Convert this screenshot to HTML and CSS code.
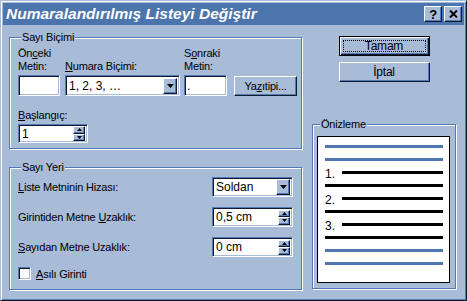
FILE: index.html
```html
<!doctype html>
<html lang="tr">
<head>
  <meta charset="UTF-8">
  <meta name="viewport" content="width=device-width, initial-scale=1">
  <title>Numaralandırılmış Listeyi Değiştir</title>
  <link rel="stylesheet" href="styles.css">
</head>
<body>
<div class="dialog">
  <div class="titlebar">
    <span class="title">Numaralandırılmış Listeyi Değiştir</span>
    <div class="title-buttons">
      <button class="tbtn raised">?</button>
      <button class="tbtn raised">
        <svg width="9" height="8" viewBox="0 0 9 8"><path d="M1 0.5 L8 7.5 M8 0.5 L1 7.5" stroke="#000" stroke-width="2"/></svg>
      </button>
    </div>
  </div>

  <div class="content">
    <div class="left">
      <fieldset class="group format">
        <legend>Sayı Biçimi</legend>
        <div class="format-row">
          <div class="field f-before">
            <label>Ön<u>c</u>eki<br>Metin:</label>
            <div class="edit sunken"></div>
          </div>
          <div class="field f-style">
            <label><u>N</u>umara Biçimi:</label>
            <div class="edit combo sunken">
              <span class="val">1, 2, 3, …</span>
              <span class="drop raised"><svg width="7" height="4" viewBox="0 0 7 4"><path d="M0 0h7L3.5 4z"/></svg></span>
            </div>
          </div>
          <div class="field f-after">
            <label>S<u>o</u>nraki<br>Metin:</label>
            <div class="edit sunken"><span class="val">.</span></div>
          </div>
          <button class="btn raised font-btn">Ya<u>z</u>ıtipi...</button>
        </div>
        <div class="field start">
          <label><u>B</u>aşlangıç:</label>
          <div class="spin sunken">
            <span class="val">1</span>
            <span class="spin-btns">
              <span class="raised"><svg width="5" height="3" viewBox="0 0 5 3"><path d="M2.5 0L5 3H0z"/></svg></span>
              <span class="raised"><svg width="5" height="3" viewBox="0 0 5 3"><path d="M0 0h5L2.5 3z"/></svg></span>
            </span>
          </div>
        </div>
      </fieldset>

      <fieldset class="group place">
        <legend>Sayı Yeri</legend>
        <div class="place-row">
          <label><u>L</u>iste Metninin Hizası:</label>
          <div class="combo sunken">
            <span class="val">Soldan</span>
            <span class="drop raised"><svg width="7" height="4" viewBox="0 0 7 4"><path d="M0 0h7L3.5 4z"/></svg></span>
          </div>
        </div>
        <div class="place-row">
          <label>Girintiden Metne <u>U</u>zaklık:</label>
          <div class="spin sunken">
            <span class="val">0,5 cm</span>
            <span class="spin-btns">
              <span class="raised"><svg width="5" height="3" viewBox="0 0 5 3"><path d="M2.5 0L5 3H0z"/></svg></span>
              <span class="raised"><svg width="5" height="3" viewBox="0 0 5 3"><path d="M0 0h5L2.5 3z"/></svg></span>
            </span>
          </div>
        </div>
        <div class="place-row">
          <label><u>S</u>ayıdan Metne Uzaklık:</label>
          <div class="spin sunken">
            <span class="val">0 cm</span>
            <span class="spin-btns">
              <span class="raised"><svg width="5" height="3" viewBox="0 0 5 3"><path d="M2.5 0L5 3H0z"/></svg></span>
              <span class="raised"><svg width="5" height="3" viewBox="0 0 5 3"><path d="M0 0h5L2.5 3z"/></svg></span>
            </span>
          </div>
        </div>
        <div class="check-row">
          <span class="checkbox sunken"></span>
          <label><u>A</u>sılı Girinti</label>
        </div>
      </fieldset>
    </div>

    <div class="right">
      <button class="btn default"><span class="focus">Tamam</span></button>
      <button class="btn raised cancel">İptal</button>
      <fieldset class="group preview">
        <legend>Önizleme</legend>
        <div class="page">
          <div class="line blue"></div>
          <div class="line blue"></div>
          <div class="num-row"><span class="num">1.</span><div class="line"></div></div>
          <div class="line"></div>
          <div class="num-row"><span class="num">2.</span><div class="line"></div></div>
          <div class="line"></div>
          <div class="num-row"><span class="num">3.</span><div class="line"></div></div>
          <div class="line"></div>
          <div class="line blue"></div>
          <div class="line blue"></div>
        </div>
      </fieldset>
    </div>
  </div>
</div>
</body>
</html>
```

FILE: styles.css
```css
* {
  box-sizing: border-box;
}
body {
  margin: 0;
  font-family: "Liberation Sans", Arial, sans-serif;
  font-size: 11px;
  letter-spacing: -0.2px;
  color: #000;
  background: #a8bbd7;
}
button {
  font: inherit;
  color: inherit;
  letter-spacing: inherit;
  padding: 0;
}
.dialog {
  width: 467px;
  height: 301px;
  padding: 2px;
  border: 1px solid;
  border-color: #a8bbd7 #0e1a2e #0e1a2e #a8bbd7;
  box-shadow: inset 1px 1px #fff, inset -1px -1px #5579b2;
  background: #a8bbd7;
  display: flex;
  flex-direction: column;
}

/* title bar */
.titlebar {
  height: 22px;
  background: #4d75ad;
  display: flex;
  align-items: center;
  justify-content: space-between;
  padding: 0 2px 0 3px;
}
.title {
  color: #fff;
  font-size: 15.5px;
  font-weight: bold;
  font-style: italic;
  letter-spacing: 0;
  line-height: 22px;
}
.title-buttons {
  display: flex;
  gap: 2px;
}
.tbtn {
  width: 18px;
  height: 16px;
  font-weight: bold;
  font-size: 13px;
  display: flex;
  align-items: center;
  justify-content: center;
}

/* bevels */
.raised {
  background: #a8bbd7;
  border: 1px solid;
  border-color: #fff #0e1a2e #0e1a2e #fff;
  box-shadow: inset -1px -1px #5579b2;
}
.sunken {
  background: #fff;
  border: 1px solid;
  border-color: #5579b2 #fff #fff #5579b2;
  box-shadow: inset 1px 1px #0e1a2e, inset -1px -1px #a8bbd7;
}

.content {
  flex: 1;
  display: flex;
  gap: 10px;
  padding: 6px 7px 8px 6px;
}
.left {
  width: 293px;
  display: flex;
  flex-direction: column;
  gap: 12px;
}
.right {
  width: 144px;
  display: flex;
  flex-direction: column;
  align-items: center;
}

/* group boxes */
.group {
  margin: 0;
  padding: 0;
  min-width: 0;
  border: 1px solid #5579b2;
  box-shadow: 1px 1px #fff, inset 1px 1px #fff;
}
.group legend {
  margin-left: 3px;
  padding: 0 1px;
  line-height: 13px;
  background: #a8bbd7;
}

.format {
  padding: 3px 3px 5px 8px;
}
.format-row {
  display: flex;
  align-items: flex-end;
}
.field {
  flex-shrink: 0;
  display: flex;
  flex-direction: column;
}
.field label {
  line-height: 13px;
  margin-bottom: 2px;
}
.edit {
  height: 21px;
  display: flex;
  align-items: center;
  padding: 0 2px;
}
.f-before { width: 42px; margin-right: 5px; }
.f-style { width: 115px; margin-right: 4px; }
.f-after { width: 43px; margin-right: 7px; }
.start {
  margin-top: 13px;
}

.val {
  flex: 1;
  white-space: nowrap;
  font-size: 12px;
  letter-spacing: 0;
}
.combo {
  display: flex;
  align-items: center;
  padding: 2px 2px 2px 3px;
}
.drop {
  width: 14px;
  height: 16px;
  display: flex;
  align-items: center;
  justify-content: center;
}
.spin {
  width: 70px;
  height: 19px;
  display: flex;
  align-items: center;
  padding: 2px 2px 2px 3px;
}
.spin-btns {
  width: 12px;
  height: 15px;
  display: flex;
  flex-direction: column;
}
.spin-btns span {
  flex: 1;
  display: flex;
  align-items: center;
  justify-content: center;
}

.place {
  flex: 1;
  padding: 3px 8px 7px 8px;
}
.place-row {
  height: 20px;
  margin-bottom: 10px;
  display: flex;
  align-items: center;
  justify-content: space-between;
}
.place .combo,
.place .spin {
  width: 81px;
  height: 20px;
}
.check-row {
  margin-top: 4px;
  display: flex;
  align-items: center;
  gap: 5px;
}
.checkbox {
  width: 13px;
  height: 13px;
}

/* buttons */
.btn {
  width: 91px;
  height: 20px;
  display: flex;
  align-items: center;
  justify-content: center;
}
.btn.font-btn {
  flex-shrink: 0;
  width: 63px;
  height: 20px;
}
.btn.default {
  margin-top: 5px;
  padding: 3px;
  background: #a8bbd7;
  border: 1px solid #000;
  box-shadow: inset 1px 1px #fff, inset -1px -1px #0e1a2e, inset -2px -2px #5579b2;
}
.focus {
  flex: 1;
  align-self: stretch;
  display: flex;
  align-items: center;
  justify-content: center;
  border: 1px dotted #000;
  font-size: 12px;
}
.cancel {
  margin-top: 6px;
  font-size: 12px;
}

.preview {
  align-self: stretch;
  margin-top: 36px;
  padding: 5px 5px 5px 4px;
}
.page {
  height: 147px;
  background: #fff;
  border: 1px solid #000;
  padding: 8px 6px 0 7px;
}
.line {
  flex: 1;
  height: 3px;
  margin-bottom: 10px;
  background: #000;
}
.line.blue {
  background: #4f77b0;
}
.num-row {
  height: 3px;
  margin-bottom: 10px;
  display: flex;
}
.num-row .line {
  margin: 0;
}
.num {
  width: 17px;
  font-size: 12px;
  letter-spacing: 0;
  line-height: 12px;
  margin-top: -3px;
}
```
